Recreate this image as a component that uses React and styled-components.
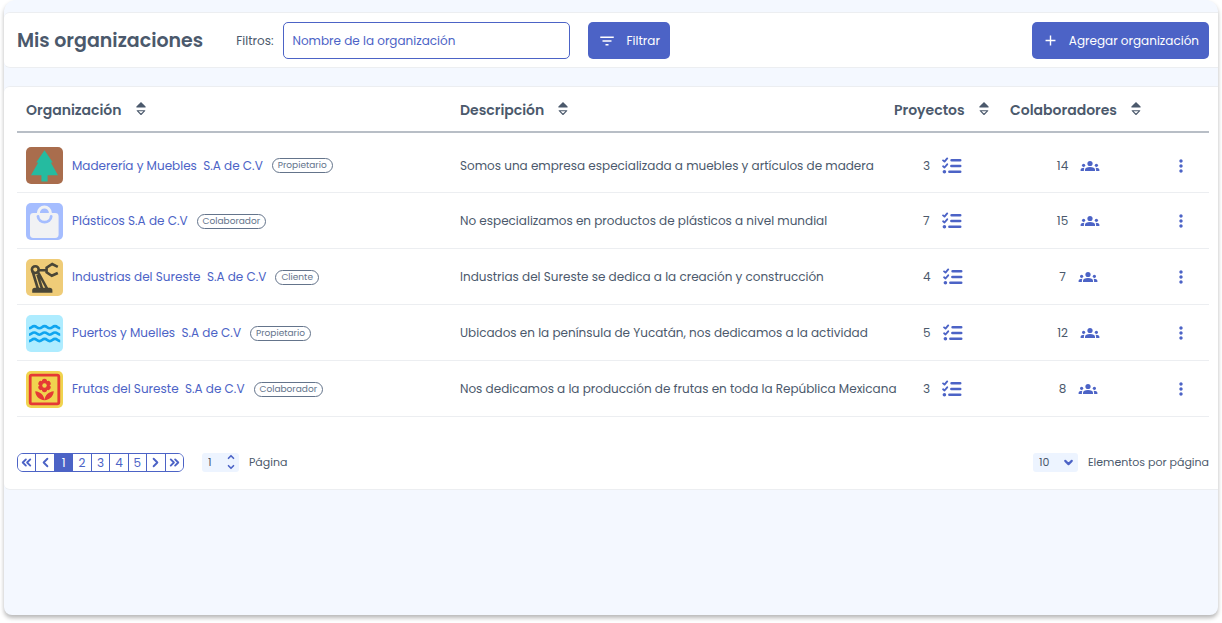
import React from "react";
import styled, { createGlobalStyle, css } from "styled-components";
import { MdFilterList, MdAdd, MdMoreVert } from "react-icons/md";
import {
  ChevronLeft,
  ChevronRight,
  ChevronsLeft,
  ChevronsRight,
  ChevronUp,
  ChevronDown,
} from "lucide-react";

const primary = "#4c63c6";
const ink = "#4b596c";
const surface = "#f4f8ff";
const hairline = "#eceef1";

const GlobalStyle = createGlobalStyle`
  * { box-sizing: border-box; }
  body {
    margin: 0;
    background: #fff;
    color: ${ink};
    font-family: Poppins, Inter, "Liberation Sans", sans-serif;
    font-size: 12px;
    line-height: 20px;
  }
  button, input, select { font: inherit; color: inherit; margin: 0; }
`;

const Page = styled.div`
  padding: 0 4px 8px;
`;

const Frame = styled.main`
  min-height: calc(100vh - 8px);
  padding-top: 12px;
  background: ${surface};
  border-radius: 12px 12px 8px 8px;
  box-shadow: 0 3px 4px rgba(0, 0, 0, 0.28);
  overflow: hidden;
`;

const Panel = styled.section`
  background: #fff;
  border: solid ${hairline};
  border-width: 1px 0;
  border-radius: 6px 0 0 6px;
`;

const Toolbar = styled(Panel)`
  display: flex;
  align-items: center;
  height: 56px;
  margin-bottom: 18px;
  padding: 0 9px 0 13px;
`;

const Title = styled.h1`
  margin: 0;
  padding-top: 2px;
  font-size: 19px;
  line-height: 28px;
  font-weight: 600;
`;

const FilterForm = styled.form`
  display: flex;
  align-items: center;
  margin: 0 auto 0 33px;
`;

const FilterLabel = styled.label`
  margin-right: 10px;
  padding-top: 2px;
`;

const FilterInput = styled.input`
  width: 287px;
  height: 37px;
  margin-right: 18px;
  padding: 2px 8px 0;
  border: 1px solid ${primary};
  border-radius: 5px;
  background: #fff;
  outline: none;
  &::placeholder {
    color: ${primary};
    opacity: 1;
  }
`;

const PrimaryButton = styled.button`
  display: flex;
  align-items: center;
  gap: 10px;
  height: 37px;
  padding: 1px 10px 0;
  border: 0;
  border-radius: 5px;
  background: ${primary};
  color: #fff;
  white-space: nowrap;
`;

const TablePanel = styled(Panel)`
  padding: 0 9px 0 13px;
`;

const Table = styled.table`
  width: 100%;
  table-layout: fixed;
  border-collapse: separate;
  border-spacing: 0;
`;

const Col = styled.col`
  width: ${(p) => p.$width || "auto"};
`;

const HeadCell = styled.th`
  height: 46px;
  padding: 1px 0 0 9px;
  border-bottom: 2px solid #b8bec6;
  text-align: left;
  font-size: 14px;
  font-weight: 600;
`;

const SortButton = styled.button`
  display: flex;
  align-items: center;
  gap: 14px;
  padding: 0;
  border: 0;
  background: none;
`;

const Cell = styled.td`
  height: 56px;
  padding: 1px 0 0 9px;
  border-bottom: 1px solid ${hairline};
  white-space: nowrap;
`;

const Row = styled.tr`
  &:first-child ${Cell} {
    height: 60px;
    padding-top: 6px;
  }
`;

const OrgInfo = styled.div`
  display: flex;
  align-items: center;
  gap: 9px;
`;

const Logo = styled.span`
  display: flex;
  flex: none;
  width: 37px;
  height: 37px;
  border-radius: 5px;
  overflow: hidden;
  background: ${(p) => p.$color};
`;

const OrgLink = styled.a`
  color: ${primary};
  text-decoration: none;
  white-space: pre;
`;

const Badge = styled.span`
  height: 15px;
  padding: 0 5px;
  border: 1px solid #64748b;
  border-radius: 8px;
  color: #64748b;
  font-size: 9px;
  line-height: 13px;
`;

const Count = styled.div`
  display: flex;
  align-items: center;
  justify-content: ${(p) => (p.$centered ? "center" : "flex-start")};
  gap: 12px;
  padding-left: ${(p) => (p.$centered ? "0" : "29px")};
  svg {
    color: ${primary};
  }
`;

const MenuButton = styled.button`
  display: flex;
  margin-left: 15px;
  padding: 0;
  border: 0;
  background: none;
  color: ${primary};
`;

const TableFooter = styled.footer`
  display: flex;
  align-items: center;
  padding: 35px 0 17px;
  font-size: 11px;
`;

const Pager = styled.nav`
  display: flex;
  width: 167px;
  height: 19px;
  margin-right: 18px;
  border: 1px solid ${primary};
  border-radius: 6px;
  overflow: hidden;
`;

const PageButton = styled.button`
  display: flex;
  flex: 1;
  align-items: center;
  justify-content: center;
  padding: 0;
  border: 0;
  background: #fff;
  color: ${primary};
  font-size: 12px;
  line-height: 17px;
  & + & {
    border-left: 1px solid ${primary};
  }
  ${(p) =>
    p.$current &&
    css`
      background: ${primary};
      color: #fff;
    `}
`;

const FieldBox = styled.span`
  display: flex;
  align-items: center;
  justify-content: space-between;
  width: ${(p) => p.$width};
  height: 19px;
  margin-right: 10px;
  padding: 0 3px 0 6px;
  border-radius: 3px;
  background: #edf4ff;
  svg {
    flex: none;
    color: ${primary};
  }
`;

const PageInput = styled.input`
  width: 14px;
  padding: 0;
  border: 0;
  background: none;
  outline: none;
`;

const SizeSelect = styled.select`
  width: 20px;
  padding: 0;
  border: 0;
  background: none;
  appearance: none;
  outline: none;
`;

const Stepper = styled.span`
  display: flex;
  flex-direction: column;
`;

const StepButton = styled.button`
  display: flex;
  padding: 0;
  border: 0;
  background: none;
`;

const FooterLabel = styled.label`
  white-space: nowrap;
`;

const Spacer = styled.span`
  flex: 1;
`;

const SortIcon = () => (
  <svg width="10" height="16" viewBox="0 0 10 16" aria-hidden="true">
    <path d="M5 0 9.600 4.600V5.400H0.400V4.600z" fill={ink} />
    <path d="M1.200 8.700h7.600L5 12.500z" fill="none" stroke={ink} strokeWidth="1.1" strokeLinejoin="round" />
  </svg>
);

const TasksIcon = () => (
  <svg width="20" height="18" viewBox="0 0 20 18" fill="none" stroke="currentColor" aria-hidden="true">
    <path d="M9.600 3.300h8.600M9.400 9h8.800M7.400 14.800h10.800" strokeWidth="2.600" strokeLinecap="round" />
    <path d="M1.100 3.400 2.500 4.600 5.200 1.400M1.100 9.300l1.400 1.200 2.700-3.200" strokeWidth="1.900" strokeLinecap="round" strokeLinejoin="round" />
    <circle cx="2.400" cy="14.800" r="1.800" fill="currentColor" stroke="none" />
  </svg>
);

const PeopleIcon = () => (
  <svg width="20" height="12" viewBox="0 0 20 12" fill="currentColor" aria-hidden="true">
    <circle cx="10" cy="3.500" r="2.600" />
    <path d="M5 11V9.600C5 7.800 7 6.900 10 6.900s5 .9 5 2.700V11z" />
    <circle cx="3.600" cy="5.300" r="1.600" />
    <circle cx="16.400" cy="5.300" r="1.600" />
    <path d="M.6 11V9.800C.6 8.400 2 7.700 4.400 7.700 4 8.300 3.900 9 3.900 9.700V11zM19.400 11V9.800c0-1.400-1.400-2.100-3.800-2.100.4.6.5 1.300.5 2V11z" />
  </svg>
);

const TreeLogo = () => (
  <svg width="37" height="37" viewBox="0 0 37 37" fill="#25bba0" aria-hidden="true">
    <path d="M18.500 3.200 26.800 15.600H24.800L32 28.200H21.600V34.400H15.400V28.200H5L12.200 15.600H10.200z" />
  </svg>
);

const BagLogo = () => (
  <svg width="37" height="37" viewBox="0 0 37 37" fill="none" aria-hidden="true">
    <rect x="4" y="10" width="28.600" height="25" rx="3.400" fill="#f1f2f4" />
    <path d="M12.400 12V10a6 6 0 0 1 12 0v2" stroke="#f1f2f4" strokeWidth="3" />
    <path d="M12 13.400c.6 7.600 12.600 7.600 13.200 0" stroke="#a5bdff" strokeWidth="2.800" strokeLinecap="round" />
  </svg>
);

const RobotArmLogo = () => (
  <svg width="37" height="37" viewBox="0 0 37 37" fill="none" stroke="#494637" aria-hidden="true">
    <circle cx="9.300" cy="10.600" r="3.400" strokeWidth="2.600" />
    <path d="M12.500 11.200H20M6.500 12 11.800 29.500M12 13 21 29.500M11.500 15.500 16 29.500" strokeWidth="2.600" />
    <path d="M31.800 7.800 26.200 5 20.600 8.600V13.400L25.800 16.800 31.800 14" strokeWidth="2.600" />
    <path d="M6.200 33.800V31.600a2.800 2.800 0 0 1 2.800-2.800H23.600a2.800 2.800 0 0 1 2.800 2.800V33.800z" fill="#494637" stroke="none" />
  </svg>
);

const WavesLogo = () => (
  <svg width="37" height="37" viewBox="0 0 37 37" fill="none" stroke="#0fa5ef" strokeWidth="2.600" aria-hidden="true">
    {[12.3, 18.7, 25.1].map((y) => (
      <path key={y} d={`M3 ${y + 1}c2.600 0 2.600-2.200 5.200-2.200s2.600 2.200 5.200 2.200 2.600-2.200 5.200-2.200 2.600 2.200 5.200 2.200 2.600-2.200 5.200-2.200 2.600 2.200 5.200 2.200`} />
    ))}
  </svg>
);

const FlowerLogo = () => (
  <svg width="37" height="37" viewBox="0 0 37 37" fill="#e53935" aria-hidden="true">
    <rect x="4.200" y="4.200" width="28.600" height="28.600" rx="1.500" fill="none" stroke="#e53935" strokeWidth="2.800" />
    {[0, 60, 120, 180, 240, 300].map((a) => (
      <circle key={a} cx="18.500" cy="10.400" r="2.600" transform={`rotate(${a} 18.500 14.500)`} />
    ))}
    <circle cx="18.500" cy="14.500" r="4.200" />
    <circle cx="18.500" cy="14.500" r="2.200" fill="#f0d44f" />
    <path d="M9.200 20.200c5.400.6 8.800 3.600 9.300 9-5.400-.6-8.800-3.600-9.300-9zM27.800 20.200c-5.400.6-8.800 3.600-9.300 9 5.400-.6 8.800-3.600 9.300-9z" />
  </svg>
);

const columns = [
  { label: "Organización" },
  { label: "Descripción" },
  { label: "Proyectos", width: "116px" },
  { label: "Colaboradores", width: "146px" },
];

const organizations = [
  { name: "Maderería y Muebles  S.A de C.V", role: "Propietario", text: "Somos una empresa especializada a muebles y artículos de madera", projects: 3, people: 14, color: "#a96d4d", Art: TreeLogo },
  { name: "Plásticos S.A de C.V", role: "Colaborador", text: "No especializamos en productos de plásticos a nivel mundial", projects: 7, people: 15, color: "#a5bdff", Art: BagLogo },
  { name: "Industrias del Sureste  S.A de C.V", role: "Cliente", text: "Industrias del Sureste se dedica a la creación y construcción", projects: 4, people: 7, color: "#efcc78", Art: RobotArmLogo },
  { name: "Puertos y Muelles  S.A de C.V", role: "Propietario", text: "Ubicados en la península de Yucatán, nos dedicamos a la actividad", projects: 5, people: 12, color: "#aeecff", Art: WavesLogo },
  { name: "Frutas del Sureste  S.A de C.V", role: "Colaborador", text: "Nos dedicamos a la producción de frutas en toda la República Mexicana", projects: 3, people: 8, color: "#f0d44f", Art: FlowerLogo },
];

const iconProps = { size: 15, strokeWidth: 3 };

export default function App() {
  return (
    <Page>
      <GlobalStyle />
      <Frame>
        <Toolbar>
          <Title>Mis organizaciones</Title>
          <FilterForm onSubmit={(e) => e.preventDefault()}>
            <FilterLabel htmlFor="org-name">Filtros:</FilterLabel>
            <FilterInput id="org-name" placeholder="Nombre de la organización" />
            <PrimaryButton type="submit">
              <MdFilterList size={18} />
              Filtrar
            </PrimaryButton>
          </FilterForm>
          <PrimaryButton type="button">
            <MdAdd size={17} />
            Agregar organización
          </PrimaryButton>
        </Toolbar>

        <TablePanel>
          <Table>
            <colgroup>
              {columns.map((c) => (
                <Col key={c.label} $width={c.width} />
              ))}
              <Col $width="62px" />
            </colgroup>
            <thead>
              <tr>
                {columns.map((c) => (
                  <HeadCell key={c.label} scope="col">
                    <SortButton type="button">
                      {c.label}
                      <SortIcon />
                    </SortButton>
                  </HeadCell>
                ))}
                <HeadCell as="td" />
              </tr>
            </thead>
            <tbody>
              {organizations.map(({ name, role, text, projects, people, color, Art }) => (
                <Row key={name}>
                  <Cell>
                    <OrgInfo>
                      <Logo $color={color}>
                        <Art />
                      </Logo>
                      <OrgLink href="#">{name}</OrgLink>
                      <Badge>{role}</Badge>
                    </OrgInfo>
                  </Cell>
                  <Cell>{text}</Cell>
                  <Cell>
                    <Count>
                      {projects}
                      <TasksIcon />
                    </Count>
                  </Cell>
                  <Cell>
                    <Count $centered>
                      {people}
                      <PeopleIcon />
                    </Count>
                  </Cell>
                  <Cell>
                    <MenuButton type="button" aria-label="Opciones">
                      <MdMoreVert size={20} />
                    </MenuButton>
                  </Cell>
                </Row>
              ))}
            </tbody>
          </Table>

          <TableFooter>
            <Pager aria-label="Paginación">
              <PageButton type="button" aria-label="Primera"><ChevronsLeft {...iconProps} /></PageButton>
              <PageButton type="button" aria-label="Anterior"><ChevronLeft {...iconProps} /></PageButton>
              {[1, 2, 3, 4, 5].map((n) => (
                <PageButton key={n} type="button" $current={n === 1}>{n}</PageButton>
              ))}
              <PageButton type="button" aria-label="Siguiente"><ChevronRight {...iconProps} /></PageButton>
              <PageButton type="button" aria-label="Última"><ChevronsRight {...iconProps} /></PageButton>
            </Pager>
            <FieldBox $width="37px">
              <PageInput id="page" defaultValue="1" />
              <Stepper>
                <StepButton type="button" aria-label="Más"><ChevronUp size={10} strokeWidth={4} /></StepButton>
                <StepButton type="button" aria-label="Menos"><ChevronDown size={10} strokeWidth={4} /></StepButton>
              </Stepper>
            </FieldBox>
            <FooterLabel htmlFor="page">Página</FooterLabel>
            <Spacer />
            <FieldBox $width="45px">
              <SizeSelect id="page-size" defaultValue="10">
                <option>10</option>
                <option>20</option>
              </SizeSelect>
              <ChevronDown size={13} strokeWidth={4} />
            </FieldBox>
            <FooterLabel htmlFor="page-size">Elementos por página</FooterLabel>
          </TableFooter>
        </TablePanel>
      </Frame>
    </Page>
  );
}
